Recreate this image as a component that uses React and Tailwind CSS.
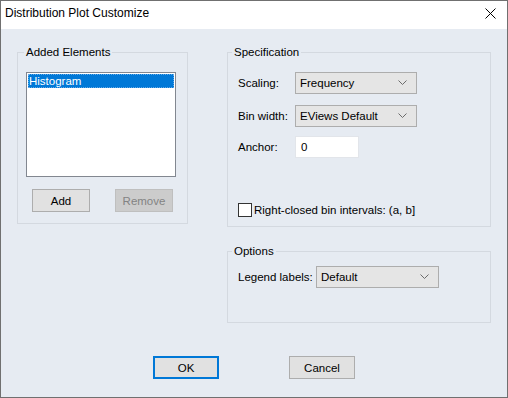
import React from 'react';

const Chevron = () => (
    <svg width="9" height="6" viewBox="0 0 9 6" className="shrink-0">
        <polyline points="0.5,0.5 4.5,4.5 8.5,0.5" fill="none" stroke="#6b6b6b" strokeWidth="1" />
    </svg>
);

const Select = ({ value, className }) => (
    <div className={`h-[22px] flex items-center justify-between pl-[4px] pr-[9px] bg-[#e5e5e5] border border-[#adadad] ${className}`}>
        <span>{value}</span>
        <Chevron />
    </div>
);

const Button = ({ children, disabled, primary, className = 'w-[58px]' }) => (
    <div
        className={`h-[23px] flex items-center justify-center border ${className} ${
            disabled
                ? 'bg-[#cccccc] border-[#bfbfbf] text-[#838383]'
                : primary
                ? 'bg-[#e1e1e1] border-2 border-[#0078d7]'
                : 'bg-[#e1e1e1] border-[#adadad]'
        }`}
    >
        {children}
    </div>
);

export default function App() {
    return (
        <div
            className="w-[508px] h-[398px] flex flex-col border border-[#707070] text-[11.5px] leading-[16px] text-black"
            style={{ fontFamily: '"Liberation Sans", Arial, sans-serif' }}
        >
            {/* Title bar */}
            <div className="h-[28px] bg-white flex items-center justify-between pl-[4px] pr-[11px] shrink-0">
                <span className="text-[12px] -mt-[4px]">Distribution Plot Customize</span>
                <svg width="11" height="11" viewBox="0 0 11 11" className="-mt-[4px]">
                    <path d="M0.5 0.5 L10.5 10.5 M10.5 0.5 L0.5 10.5" stroke="#000" strokeWidth="1" />
                </svg>
            </div>

            {/* Client area */}
            <div className="flex-1 bg-[#e6ebf2] flex flex-col pl-[16px] pt-[15px]">
                <div className="flex gap-[39px] items-start">
                    {/* Added Elements */}
                    <fieldset className="w-[171px] border border-[#d4d9e0] px-[8px] pb-[11px]">
                        <legend className="-ml-[2px] px-[2px]">Added Elements</legend>
                        <div className="mt-[12px] h-[105px] w-[150px] bg-white border border-[#828790] p-[1px]">
                            <div className="h-[14px] bg-[#0078d7] text-white leading-[14px] pl-[1px] outline-1 outline-dotted outline-offset-[-1px] outline-[#5fa8e8]">
                                Histogram
                            </div>
                        </div>
                        <div className="flex justify-between mt-[12px] px-[6px]">
                            <Button>Add</Button>
                            <Button disabled>Remove</Button>
                        </div>
                    </fieldset>

                    <div className="flex flex-col gap-[16px]">
                        {/* Specification */}
                        <fieldset className="w-[264px] border border-[#d4d9e0] px-[10px] pb-[8px]">
                            <legend className="-ml-[6px] px-[2px]">Specification</legend>
                            <div className="mt-[12px] flex items-center">
                                <span className="w-[57px]">Scaling:</span>
                                <Select value="Frequency" className="w-[122px]" />
                            </div>
                            <div className="mt-[11px] flex items-center">
                                <span className="w-[57px]">Bin width:</span>
                                <Select value="EViews Default" className="w-[122px]" />
                            </div>
                            <div className="mt-[9px] flex items-center">
                                <span className="w-[57px]">Anchor:</span>
                                <div className="w-[64px] h-[22px] bg-white border border-[#e2e5ea] flex items-center pl-[5px]">0</div>
                            </div>
                            <label className="mt-[44px] flex items-center gap-[2px]">
                                <span className="w-[14px] h-[14px] bg-white border border-[#333333]" />
                                <span>Right-closed bin intervals: (a, b]</span>
                            </label>
                        </fieldset>

                        {/* Options */}
                        <fieldset className="w-[264px] border border-[#d4d9e0] px-[10px] pb-[34px]">
                            <legend className="-ml-[6px] px-[2px]">Options</legend>
                            <div className="mt-[7px] flex items-center">
                                <span className="w-[78px] whitespace-nowrap">Legend labels:</span>
                                <Select value="Default" className="w-[123px]" />
                            </div>
                        </fieldset>
                    </div>
                </div>

                <div className="flex justify-center gap-[70px] mt-[33px] pr-[16px]">
                    <Button primary className="w-[66px]">OK</Button>
                    <Button className="w-[66px]">Cancel</Button>
                </div>
            </div>
        </div>
    );
}
